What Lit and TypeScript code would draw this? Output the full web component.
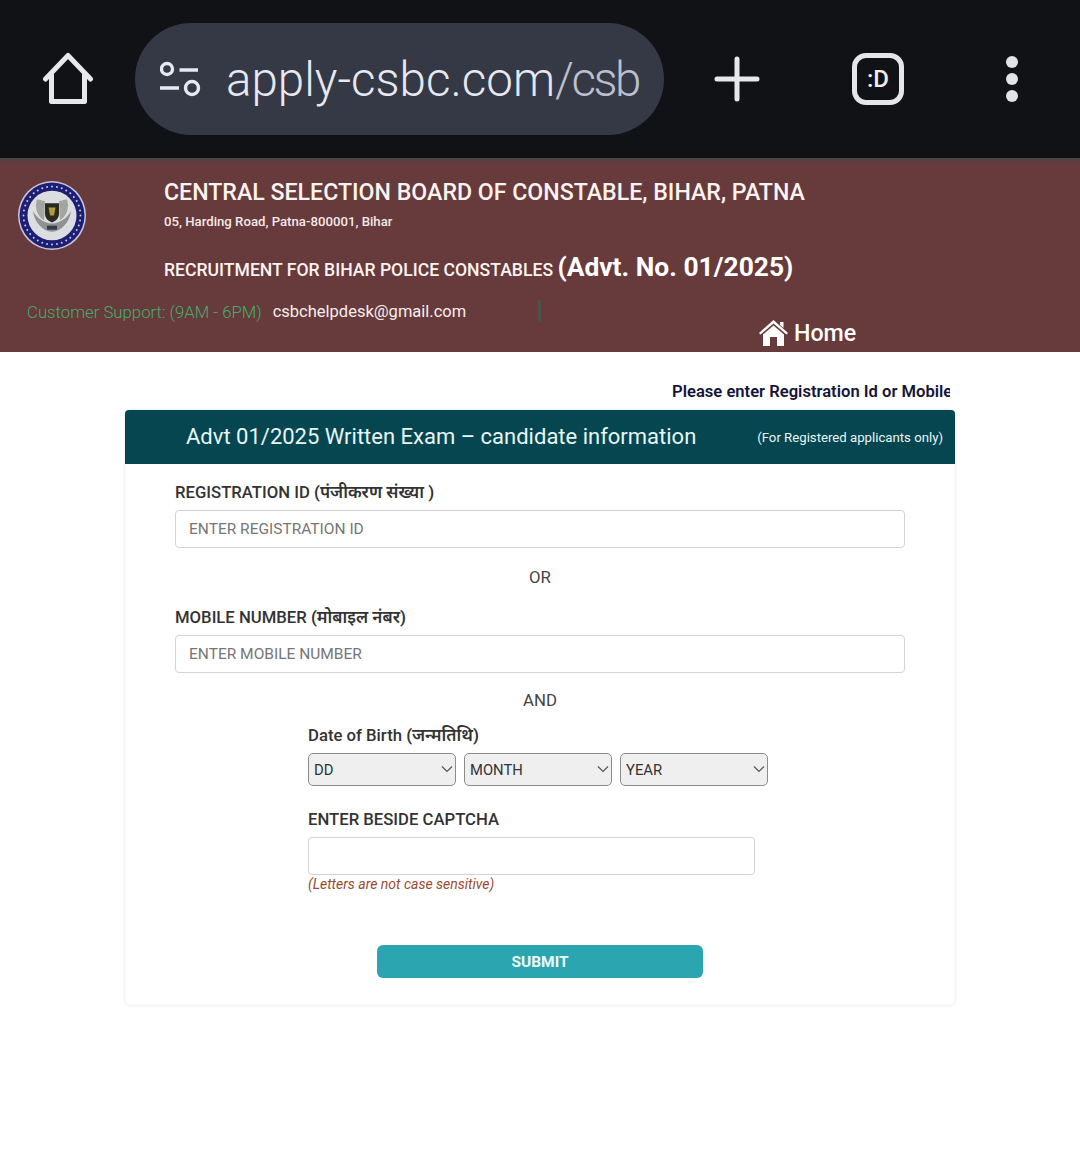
import { LitElement, html, css, svg } from "lit";
import { customElement } from "lit/decorators.js";

const ticks = Array.from({ length: 36 }, (_, i) => {
  const a = (i * Math.PI) / 18;
  return svg`<circle cx=${34 + 28.5 * Math.cos(a)} cy=${34 + 28.5 * Math.sin(a)} r="1" fill="#c8c8e4"></circle>`;
});

const chevron = html`<svg class="chev" width="12" height="8" viewBox="0 0 12 8" fill="none" stroke="#555" stroke-width="1.2"><path d="M1 1.500 6 6.500 11 1.500"/></svg>`;

@customElement("app-root")
export class AppRoot extends LitElement {
  static styles = css`
    :host { display: block; background: #fff; height: 1172px; font-family: Roboto, "Noto Sans", "Noto Sans CJK SC", sans-serif; color: #333; overflow: hidden; }
    * { box-sizing: border-box; }
    .bar { height: 158px; background: #111216; display: flex; align-items: center; }
    .bar svg { display: block; flex: none; }
    .ic-home { margin-left: 42px; }
    .pill { margin-left: 41px; width: 529px; height: 112px; border-radius: 56px; background: #343945; display: flex; align-items: center; padding-left: 25px; color: #e6e8f2; flex: none; }
    .url { margin-left: 22px; padding-top: 3px; font-size: 47.5px; font-weight: 300; white-space: nowrap; line-height: 1; }
    .url span { color: #bcc0cc; letter-spacing: -2.5px; }
    .ic-plus { margin-left: 50px; }
    .ic-tab { margin-left: 92px; width: 52px; height: 52px; flex: none; border: 5px solid #e6e6e8; border-radius: 14px; color: #eee; display: flex; align-items: center; justify-content: center; font-size: 24px; font-weight: 500; }
    .ic-dots { margin-left: 100px; }
    .head { height: 194px; background: #673a3b; border-top: 3px solid #4a4543; color: #fff; display: grid; grid-template-columns: 164px 1fr; grid-template-rows: 127px 1fr; }
    .logo { padding: 20px 0 0 18px; }
    .logo svg { display: block; }
    .titles { padding-top: 18px; }
    .t1 { font-size: 23.15px; font-weight: 500; line-height: 28px; color: #fbf3f1; white-space: nowrap; }
    .t2 { font-size: 13.2px; font-weight: 500; line-height: 16px; margin-top: 7px; color: #f3e9e8; }
    .t3 { font-size: 17.6px; font-weight: 500; line-height: 32px; margin-top: 21px; color: #fbf3f1; white-space: nowrap; }
    .t3 b { font-size: 26.4px; font-weight: 700; color: #fff; }
    .foot { grid-column: 1 / 3; position: relative; padding: 12px 0 0 27px; height: 64px; }
    .sup { display: flex; white-space: nowrap; line-height: 24px; }
    .sup .g { color: #45ad6e; font-weight: 300; font-size: 16.75px; }
    .sup .m { margin-left: 11px; color: #f6eeee; font-size: 16.5px; }
    .sep { margin-left: 72px; width: 3px; height: 22px; flex: none; background: #4d5148; }
    .homelink { position: absolute; left: 759px; top: 31px; display: flex; align-items: center; gap: 6px; font-size: 23.2px; font-weight: 500; line-height: 28px; color: #fff; }
    .main { width: 830px; margin-left: 125px; }
    .notice { width: 278px; margin-left: 547px; height: 58px; padding-top: 30px; overflow: hidden; white-space: nowrap; font-size: 16.6px; font-weight: 600; line-height: 20px; color: #14143a; }
    .card { height: 595px; border-radius: 5px; box-shadow: 0 0 3px rgba(0,0,0,.14); background: #fff; }
    .card-h { height: 54px; background: #054650; border-radius: 4px 4px 0 0; display: flex; align-items: center; color: #e8f6f6; padding: 0 12px 0 61px; justify-content: space-between; }
    .card-h .a { font-size: 22px; padding-bottom: 2px; }
    .card-h .b { font-size: 13.2px; }
    .body { padding: 18px 50px 0; }
    .lbl { display: block; height: 22px; font-size: 16.7px; font-weight: 500; line-height: 22px; color: #333; margin: 0; white-space: nowrap; }
    .hi { font-size: 17px; font-weight: 600; line-height: 1; }
    input { display: block; width: 100%; height: 38px; border: 1px solid #d4d4d4; border-radius: 4px; padding: 0 13px; margin-top: 6px; font: 400 15.5px Roboto, sans-serif; background: #fff; box-shadow: 0 -1px 2px rgba(0,0,0,.03); }
    input::placeholder { color: #767676; opacity: 1; }
    .or { text-align: center; font-size: 16.8px; line-height: 20px; color: #444; }
    .or1 { margin: 19px 0 20px; }
    .or2 { margin: 17px 0 15px; }
    .inner { margin-left: 133px; }
    .sels { display: flex; gap: 8px; margin-top: 6px; }
    .selw { position: relative; width: 148px; height: 33px; }
    .chev { position: absolute; right: 3px; top: 12px; pointer-events: none; }
    select { appearance: none; -webkit-appearance: none; display: block; width: 100%; height: 33px; border: 1px solid #8b8b8b; border-radius: 5px; background: #efefef; font: 400 14.8px Roboto, sans-serif; color: #333; padding: 0 5px; }
    .cap { margin-top: 23px; }
    .cap input { width: 447px; }
    .hint { font-size: 14px; font-style: italic; line-height: 18px; color: #9a4a30; }
    .sub { display: block; width: 326px; height: 33px; margin: 52px 0 0 202px; border: 0; border-radius: 6px; background: #2ba6b0; color: #eefbfb; font: 700 15.5px Roboto, sans-serif; }
  `;

  render() {
    return html`
      <div class="bar">
        <svg class="ic-home" width="52" height="54" viewBox="0 0 52 54" fill="none" stroke="#e8e8ec" stroke-width="5" stroke-linejoin="round" stroke-linecap="round">
          <path d="M3.500 27 26 3.500 48.500 27M9.500 23V49.500H42.500V23"/>
        </svg>
        <div class="pill">
          <svg width="44" height="36" viewBox="0 0 44 36" fill="none" stroke="#e6e8f2" stroke-width="3.400">
            <circle cx="7" cy="8" r="5.500"/><path d="M19.500 9H38M0 27H19"/><circle cx="32" cy="27" r="6.500"/>
          </svg>
          <div class="url">apply-csbc.com<span>/csb</span></div>
        </div>
        <svg class="ic-plus" width="46" height="46" viewBox="0 0 46 46" stroke="#e8e8ec" stroke-width="5" stroke-linecap="round"><path d="M23 3V43M3 23H43"/></svg>
        <div class="ic-tab">:D</div>
        <svg class="ic-dots" width="16" height="48" viewBox="0 0 16 48" fill="#e3e3e6"><circle cx="8" cy="7" r="6"/><circle cx="8" cy="24" r="6"/><circle cx="8" cy="41" r="6"/></svg>
      </div>

      <header class="head">
        <div class="logo">
          <svg width="68" height="69" viewBox="0 0 68 68" preserveAspectRatio="none">
            <circle cx="34" cy="34" r="34" fill="#c9c6dc"/>
            <circle cx="34" cy="34" r="32.500" fill="#1c1f74"/>
            ${ticks}
            <circle cx="34" cy="34" r="24.500" fill="#dcdde0"/>
            <path d="M15 30C17 42 25 49 34 50 43 49 51 42 53 30 48 37 43 41 34 42 25 41 20 37 15 30Z" fill="#8f9290"/>
            <path d="M19 18C16 27 20 35 26 39L27 20ZM49 18C52 27 48 35 42 39L41 20Z" fill="#a3a6a0"/>
            <path d="M27 22H41V32C41 37 38 39 34 41 30 39 27 37 27 32Z" fill="#2a2a20"/>
            <path d="M30.500 26H37.500L36 34H32Z" fill="#b09a3c"/>
            <rect x="29" y="44" width="10" height="4" fill="#3a3a50"/>
          </svg>
        </div>
        <div class="titles">
          <div class="t1">CENTRAL SELECTION BOARD OF CONSTABLE, BIHAR, PATNA</div>
          <div class="t2">05, Harding Road, Patna-800001, Bihar</div>
          <div class="t3">RECRUITMENT FOR BIHAR POLICE CONSTABLES <b>(Advt. No. 01/2025)</b></div>
        </div>
        <div class="foot">
          <div class="sup"><span class="g">Customer Support: (9AM - 6PM)</span><span class="m">csbchelpdesk@gmail.com</span><span class="sep"></span></div>
          <div class="homelink">
            <svg width="29" height="26" viewBox="0 0 29 26"><path d="M14.500 0 29 13 27.500 14.500 14.500 3.500 1.500 14.500 0 13Z" fill="#fff"/><path d="M14.500 5.500 25 14.500V26H18V17H11V26H4V14.500Z" fill="#fff"/><path d="M21 2H24.500V8L21 5Z" fill="#fff"/></svg>
            <span>Home</span>
          </div>
        </div>
      </header>

      <main class="main">
        <div class="notice">Please enter Registration Id or Mobile</div>
        <section class="card">
          <div class="card-h"><span class="a">Advt 01/2025 Written Exam – candidate information</span><span class="b">(For Registered applicants only)</span></div>
          <form class="body">
            <label class="lbl">REGISTRATION ID <span class="hi">(पंजीकरण संख्या )</span></label>
            <input placeholder="ENTER REGISTRATION ID" />
            <div class="or or1">OR</div>
            <label class="lbl">MOBILE NUMBER <span class="hi">(मोबाइल नंबर)</span></label>
            <input placeholder="ENTER MOBILE NUMBER" />
            <div class="or or2">AND</div>
            <div class="inner">
              <label class="lbl">Date of Birth <span class="hi">(जन्मतिथि)</span></label>
              <div class="sels">
                <div class="selw"><select><option>DD</option></select>${chevron}</div>
                <div class="selw"><select><option>MONTH</option></select>${chevron}</div>
                <div class="selw"><select><option>YEAR</option></select>${chevron}</div>
              </div>
              <div class="cap">
                <label class="lbl">ENTER BESIDE CAPTCHA</label>
                <input />
                <div class="hint">(Letters are not case sensitive)</div>
              </div>
            </div>
            <button class="sub" type="button">SUBMIT</button>
          </form>
        </section>
      </main>
    `;
  }
}
